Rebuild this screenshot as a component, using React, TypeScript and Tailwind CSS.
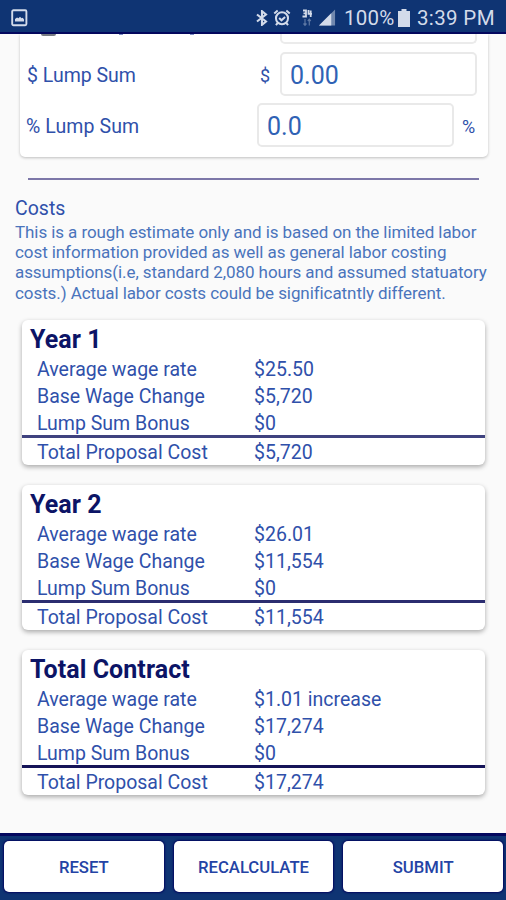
import React from "react";

interface YearCost {
  title: string;
  wage: string;
  base: string;
  bonus: string;
  total: string;
  line: string;
}

const costs: YearCost[] = [
  { title: "Year 1", wage: "$25.50", base: "$5,720", bonus: "$0", total: "$5,720", line: "border-[#3f427f]" },
  { title: "Year 2", wage: "$26.01", base: "$11,554", bonus: "$0", total: "$11,554", line: "border-[#2b2d70]" },
  { title: "Total Contract", wage: "$1.01 increase", base: "$17,274", bonus: "$0", total: "$17,274", line: "border-[#151458]" },
];

const StatusBar: React.FC = () => (
  <header className="flex h-[34px] shrink-0 items-center justify-between border-b-2 border-[#04085f] bg-[#0f3473] pl-[11px] pr-[10px] pt-[3px] text-[#d3dbea]">
    <svg width="17" height="18" viewBox="0 0 17 18">
      <rect x="1.2" y="1.2" width="14.2" height="15" rx="1.2" fill="none" stroke="currentColor" strokeWidth="1.9" />
      <path d="M4 12.5V10l2-1.5 1.5.8L9 7.8l1.6 1.5 1.2-.6 1.2 1.8v2z" fill="currentColor" />
    </svg>
    <div className="flex items-center">
      <svg width="12" height="16" viewBox="0 0 12 16" fill="none" stroke="currentColor" strokeWidth="2.1">
        <path d="M1 4.5l9 7-4 3.3V1.2l4 3.3-9 7" />
      </svg>
      <svg className="ml-[5px]" width="18" height="18" viewBox="0 0 17 17" fill="none" stroke="currentColor" strokeWidth="1.9">
        <circle cx="8.5" cy="8.8" r="5.7" />
        <path d="M1.2 4.2L4.4 1.5M15.8 4.2l-3.2-2.7M5.8 8.5l2.2 2.2 3.4-3.2M4.5 13l-1.7 2.2M12.5 13l1.7 2.2" />
      </svg>
      <svg className="ml-[10px]" width="12" height="18" viewBox="0 0 12 18" fill="none" stroke="currentColor">
        <path d="M2 1.5h3v2.8H2.5M5 4.3v3.2H1.5M7.5 1v3.8h3.5M9.7 1.5v6.5" strokeWidth="1.8" />
        <path d="M4 10v6M2.5 14.5L4 16.3l1.5-1.8M8.3 16.5v-6M6.8 12l1.5-1.8L9.8 12" strokeWidth="1.2" opacity="0.4" />
      </svg>
      <svg className="ml-[6px]" width="17" height="17" viewBox="0 0 18 17" fill="currentColor">
        <path d="M0 17L17 0v17z" opacity="0.5" />
        <path d="M0 17L13 4v13z" />
      </svg>
      <span className="ml-[8px] w-[51px] whitespace-nowrap pt-[1px] text-[20.5px] leading-none tracking-[0.2px]">100%</span>
      <svg className="ml-[3px]" width="12" height="18" viewBox="0 0 12 18" fill="currentColor">
        <path d="M3.5 0h5v2H12v16H0V2h3.5z" />
      </svg>
      <span className="ml-[7px] w-[79px] whitespace-nowrap pt-[1px] text-[20.5px] leading-none tracking-[0.35px]">3:39 PM</span>
    </div>
  </header>
);

const LumpSumCard: React.FC = () => (
  <section className="ml-[20px] mr-[18px] h-[123px] shrink-0 rounded-b-[5px] bg-white shadow-[0_1px_3px_rgba(0,0,0,0.24)]">
    {/* row scrolled under the status bar */}
    <div className="flex h-[10px] items-start">
      <div className="ml-[21px] h-[2px] w-[15px] rounded-b-full bg-[#777b82]" />
      <div className="ml-[63px] h-px w-[4px] bg-[#7f8fc4]" />
      <div className="ml-[67px] h-px w-[4px] bg-[#7f8fc4]" />
      <div className="ml-[86px] h-[10px] w-[197px] rounded-b-[5px] border-2 border-t-0 border-[#ebebeb]" />
    </div>
    <div className="mt-[8px] flex h-[44px] items-center">
      <span className="ml-[7px] w-[233px] pt-[3px] text-[19.5px]">$ Lump Sum</span>
      <span className="w-[20px] pt-[2px] text-[18px]">$</span>
      <div className="flex h-[44px] w-[197px] items-center rounded-[5px] border-2 border-[#e9e9e9] px-[8px] pt-[3px] text-[25px] text-[#2f62b5]">0.00</div>
    </div>
    <div className="mt-[7px] flex h-[44px] items-center">
      <span className="ml-[6px] w-[231px] pt-[3px] text-[19.5px] tracking-[0.1px]">% Lump Sum</span>
      <div className="flex h-[44px] w-[197px] items-center rounded-[5px] border-2 border-[#e9e9e9] px-[8px] pt-[3px] text-[25px] text-[#2f62b5]">0.0</div>
      <span className="ml-[8px] pt-[2px] text-[18px]">%</span>
    </div>
  </section>
);

const CostRow: React.FC<{ label: string; value: string }> = ({ label, value }) => (
  <div className="flex h-[27px] items-center pl-[15px]">
    <span className="w-[217px]">{label}</span>
    <span>{value}</span>
  </div>
);

const CostCard: React.FC<{ cost: YearCost }> = ({ cost }) => (
  <section className="ml-[22px] mr-[21px] h-[145px] rounded-[6px] bg-white text-[19.5px] shadow-[0_2px_5px_rgba(0,0,0,0.33)]">
    <h2 className="h-[36px] pl-[8px] pt-[4px] text-[25px] font-bold leading-[32px] tracking-[0.08px] text-[#0c1466]">{cost.title}</h2>
    <CostRow label="Average wage rate" value={cost.wage} />
    <CostRow label="Base Wage Change" value={cost.base} />
    <CostRow label="Lump Sum Bonus" value={cost.bonus} />
    <div className={`-mt-[2px] border-t-[3px] pt-px ${cost.line}`}>
      <CostRow label="Total Proposal Cost" value={cost.total} />
    </div>
  </section>
);

const App: React.FC = () => {
  return (
    <div className="flex h-[900px] w-[506px] flex-col overflow-hidden bg-[#fafafa] font-['Roboto',sans-serif] text-[#2f50aa]">
      <StatusBar />
      <main className="flex flex-1 flex-col">
        <LumpSumCard />
        <hr className="ml-[28px] mr-[27px] mt-[21px] border-t-2 border-[#7c77a8]" />
        <div className="ml-[15px] mt-[16px] whitespace-nowrap">
          <h1 className="text-[19.5px] leading-[25px]">Costs</h1>
          <p className="mt-[1px] text-[17px] leading-[20.2px] tracking-[-0.08px] text-[#4a74bc]">
            This is a rough estimate only and is based on the limited labor
            <br />
            cost information provided as well as general labor costing
            <br />
            assumptions(i.e, standard 2,080 hours and assumed statuatory
            <br />
            costs.) Actual labor costs could be significatntly different.
          </p>
        </div>
        <div className="mt-[17px] flex flex-col gap-[20px]">
          {costs.map((cost) => (
            <CostCard key={cost.title} cost={cost} />
          ))}
        </div>
      </main>
      <footer className="flex h-[67px] shrink-0 gap-[10px] border-t-[3px] border-[#04085f] bg-[#0f3473] pb-[8px] pl-[4px] pr-[3px] pt-[5px]">
        {["RESET", "RECALCULATE", "SUBMIT"].map((label) => (
          <button
            key={label}
            className="flex-1 rounded-[5px] bg-white pt-[2px] text-[16.7px] font-medium text-[#2443a5] shadow-[0_0_2px_1px_#04085f]"
          >
            {label}
          </button>
        ))}
      </footer>
    </div>
  );
};

export default App;
